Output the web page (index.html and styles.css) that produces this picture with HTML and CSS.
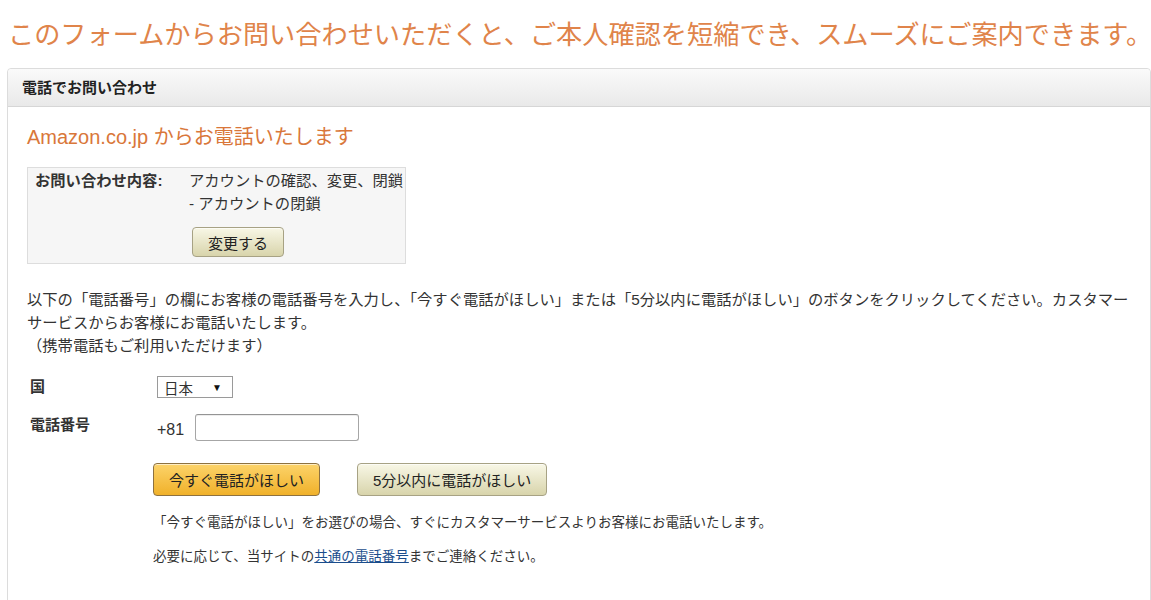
FILE: index.html
```html
<!DOCTYPE html>
<html lang="ja">
<head>
<meta charset="UTF-8">
<meta name="viewport" content="width=device-width, initial-scale=1.0">
<title>電話でお問い合わせ</title>
<link rel="stylesheet" href="styles.css">
</head>
<body>

<h1 class="lead">このフォームからお問い合わせいただくと、ご本人確認を短縮でき、スムーズにご案内できます。</h1>

<div class="panel">
    <div class="panel-head">電話でお問い合わせ</div>
    <div class="panel-body">
        <h2 class="call-title">Amazon.co.jp からお電話いたします</h2>

        <div class="topic-box">
            <div class="topic-label">お問い合わせ内容:</div>
            <div class="topic-value">
                <div>アカウントの確認、変更、閉鎖</div>
                <div>- アカウントの閉鎖</div>
                <button type="button" class="btn btn-plain btn-change">変更する</button>
            </div>
        </div>

        <p class="intro">以下の「電話番号」の欄にお客様の電話番号を入力し、「今すぐ電話がほしい」または「5分以内に電話がほしい」のボタンをクリックしてください。カスタマーサービスからお客様にお電話いたします。<br>（携帯電話もご利用いただけます）</p>

        <form id="call-form" class="call-form">
            <div class="form-row">
                <label for="country">国</label>
                <div class="field">
                    <span class="select-box">
                        <select id="country">
                            <option>日本</option>
                        </select>
                        <span class="select-arrow">▼</span>
                    </span>
                </div>
            </div>
            <div class="form-row">
                <label for="phone">電話番号</label>
                <div class="field field-phone">
                    <span class="prefix">+81</span>
                    <input type="tel" id="phone">
                </div>
            </div>

            <div class="actions">
                <button type="submit" class="btn btn-primary">今すぐ電話がほしい</button>
                <button type="button" class="btn btn-plain">5分以内に電話がほしい</button>
            </div>
        </form>

        <p class="note">「今すぐ電話がほしい」をお選びの場合、すぐにカスタマーサービスよりお客様にお電話いたします。</p>
        <p class="note">必要に応じて、当サイトの<a href="#">共通の電話番号</a>までご連絡ください。</p>
    </div>
</div>

<script>
    document.getElementById('call-form').addEventListener('submit', function(event) {
        event.preventDefault();
    });
</script>

</body>
</html>
```

FILE: styles.css
```css
body {
    margin: 0;
    font-family: "Liberation Sans", "Noto Sans CJK JP", sans-serif;
    color: #333;
    background: #fff;
}
.lead {
    margin: 0 0 18px;
    padding: 20px 0 0 8px;
    font-size: 26.2px;
    line-height: 30px;
    font-weight: normal;
    color: #e0844a;
    white-space: nowrap;
}
.panel {
    margin-left: 7px;
    border: 1px solid #dcdcdc;
    border-radius: 4px 4px 0 0;
}
.panel-head {
    height: 37px;
    line-height: 37px;
    padding-left: 14px;
    font-size: 15px;
    font-weight: bold;
    color: #222;
    background: linear-gradient(to bottom, #fafafa, #e9e9e9);
    border-bottom: 1px solid #d6d6d6;
    border-radius: 4px 4px 0 0;
}
.panel-body {
    padding: 17px 19px 60px;
    font-size: 15.3px;
}
.call-title {
    margin: 0;
    font-size: 20px;
    line-height: 26px;
    font-weight: normal;
    color: #d9773a;
}
.topic-box {
    display: grid;
    grid-template-columns: 161px auto;
    width: 377px;
    margin-top: 17px;
    padding: 1px 0 6px;
    background: #f6f6f6;
    border: 1px solid #dddddd;
    line-height: 23px;
}
.topic-label {
    padding-left: 7px;
    font-weight: bold;
}
.btn {
    font-family: "Liberation Sans", "Noto Sans CJK JP", sans-serif;
    font-size: 15px;
    color: #222;
    padding: 0 15px;
    border-radius: 4px;
    cursor: pointer;
    box-shadow: 0 1px 0 rgba(255, 255, 255, 0.6) inset;
}
.btn-plain {
    background: linear-gradient(to bottom, #f8f7e6, #d8d4ab);
    border: 1px solid #a7a284;
}
.btn-primary {
    background: linear-gradient(to bottom, #fcd36a, #f0b12a);
    border: 1px solid #8d7140;
}
.btn-change {
    display: block;
    height: 30px;
    margin: 12px 0 0 3px;
}
.intro {
    margin: 24px 0 0;
    line-height: 23px;
}
.call-form {
    margin-top: 19px;
}
.form-row {
    display: grid;
    grid-template-columns: 130px auto;
    margin-bottom: 16px;
}
.form-row label {
    padding-left: 3px;
    font-weight: bold;
    font-size: 15px;
    line-height: 22px;
}
.select-box {
    display: inline-flex;
    align-items: center;
    width: 74px;
    height: 20px;
    border: 1px solid #9a9a9a;
    background: #fff;
}
.select-box select {
    appearance: none;
    -webkit-appearance: none;
    border: none;
    background: transparent;
    padding: 0 0 0 6px;
    width: 54px;
    font-family: "Noto Sans CJK JP", sans-serif;
    font-size: 14.5px;
    color: #333;
    outline: none;
}
.select-arrow {
    font-size: 10px;
    color: #111;
}
.field-phone {
    display: flex;
    align-items: flex-end;
    gap: 11px;
}
.prefix {
    font-size: 16px;
    line-height: 20px;
    padding-bottom: 1px;
}
.field-phone input {
    width: 164px;
    height: 27px;
    box-sizing: border-box;
    border: 1px solid #a6a6a6;
    border-top-color: #949494;
    border-radius: 3px;
    box-shadow: 0 1px 0 rgba(255, 255, 255, 0.5), 0 1px 0 rgba(0, 0, 0, 0.07) inset;
    padding: 3px 6px;
}
.actions {
    display: flex;
    gap: 37px;
    margin: 22px 0 0 126px;
}
.actions .btn {
    height: 33px;
}
.note {
    margin: 17px 0 0 126px;
    font-size: 13.5px;
    line-height: 20px;
}
.note + .note {
    margin-top: 14px;
}
.note a {
    color: #1a4d8c;
    text-decoration: underline;
}
```
